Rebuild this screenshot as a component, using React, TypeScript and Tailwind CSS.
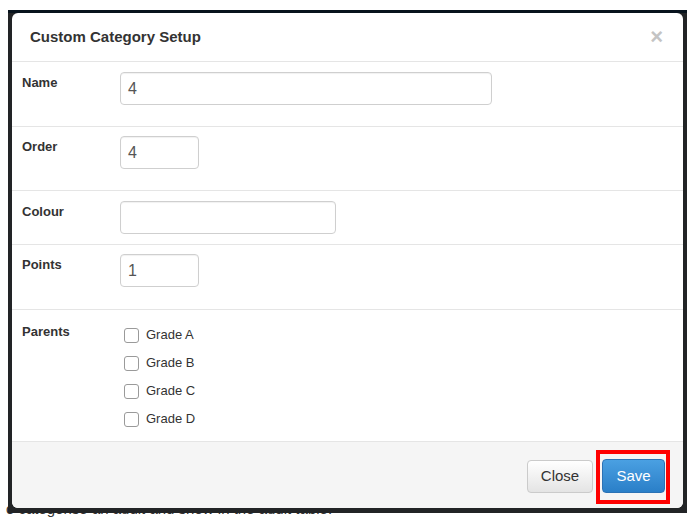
import React from "react";

const grades = ["Grade A", "Grade B", "Grade C", "Grade D"];

function TextInput({ value, width }: { value: string; width: string }) {
  return (
    <div
      className={`${width} h-[33px] rounded-[4px] border border-[#cfcfcf] bg-white px-[7px] flex items-center text-[16px] text-[#555] shadow-[inset_0_1px_1px_rgba(0,0,0,0.06)]`}
    >
      {value}
    </div>
  );
}

function Row({
  label,
  children,
  className,
}: {
  label: string;
  children: React.ReactNode;
  className: string;
}) {
  return (
    <div className={`flex border-b border-[#e5e5e5] px-[10px] ${className}`}>
      <div className="w-[98px] shrink-0 pt-[2px] text-[13px] leading-[18px] font-bold text-[#333]">
        {label}
      </div>
      <div className="flex-1">{children}</div>
    </div>
  );
}

export default function App() {
  return (
    <div
      className="w-[696px] h-[526px] bg-white overflow-hidden"
      style={{ fontFamily: '"Liberation Sans", Arial, sans-serif' }}
    >
      <div className="h-[10px]" />
      <div className="relative z-10 ml-[8px] w-[679px] h-[503px] bg-[#222426] border-t-[3px] border-[#07131d] pl-[4px] pr-[4px] pb-[5px]">
        <div className="h-full bg-white rounded-[6px] flex flex-col overflow-hidden">
          {/* header */}
          <div className="h-[49px] shrink-0 border-b border-[#e5e5e5] flex items-center justify-between pl-[18px] pr-[20px]">
            <div className="text-[15px] font-bold text-[#333]">Custom Category Setup</div>
            <div className="text-[22px] font-bold leading-none text-[#c4c4c4]">×</div>
          </div>

          <Row label="Name" className="pt-[10px] pb-[21px]">
            <TextInput value="4" width="w-[372px]" />
          </Row>
          <Row label="Order" className="pt-[9px] pb-[21px]">
            <TextInput value="4" width="w-[79px]" />
          </Row>
          <Row label="Colour" className="pt-[10px] pb-[10px]">
            <TextInput value="" width="w-[216px]" />
          </Row>
          <Row label="Points" className="pt-[9px] pb-[22px]">
            <TextInput value="1" width="w-[79px]" />
          </Row>
          <Row label="Parents" className="pt-[11px] pb-[8px] flex-1">
            <div className="flex flex-col">
              {grades.map((g) => (
                <label key={g} className="h-[28px] flex items-center pl-[4px]">
                  <span className="w-[15px] h-[15px] rounded-[3px] border border-[#9a9a9a] bg-white" />
                  <span className="ml-[7px] text-[13px] text-[#333]">{g}</span>
                </label>
              ))}
            </div>
          </Row>

          {/* footer */}
          <div className="h-[68px] shrink-0 bg-[#f5f5f5] flex items-center justify-end gap-[9px] pr-[18px]">
            <button className="h-[33px] w-[66px] rounded-[4px] border border-[#cbcbcb] bg-gradient-to-b from-white to-[#e4e4e4] text-[15px] text-[#333]">
              Close
            </button>
            <div className="relative">
              <button className="h-[34px] w-[63px] rounded-[4px] border border-[#2b72b5] bg-gradient-to-b from-[#4aa0e2] to-[#2a7fc8] text-[15px] text-white">
                Save
              </button>
              <div className="absolute -left-[6px] -right-[5px] -top-[9px] -bottom-[11px] border-[4px] border-[#ff0000]" />
            </div>
          </div>
        </div>
      </div>
      <div className="-mt-[13px] pl-[6px] text-[15px] leading-[18px] text-[#333] whitespace-nowrap">
        o categorise an audit and show in the audit table.
      </div>
    </div>
  );
}
